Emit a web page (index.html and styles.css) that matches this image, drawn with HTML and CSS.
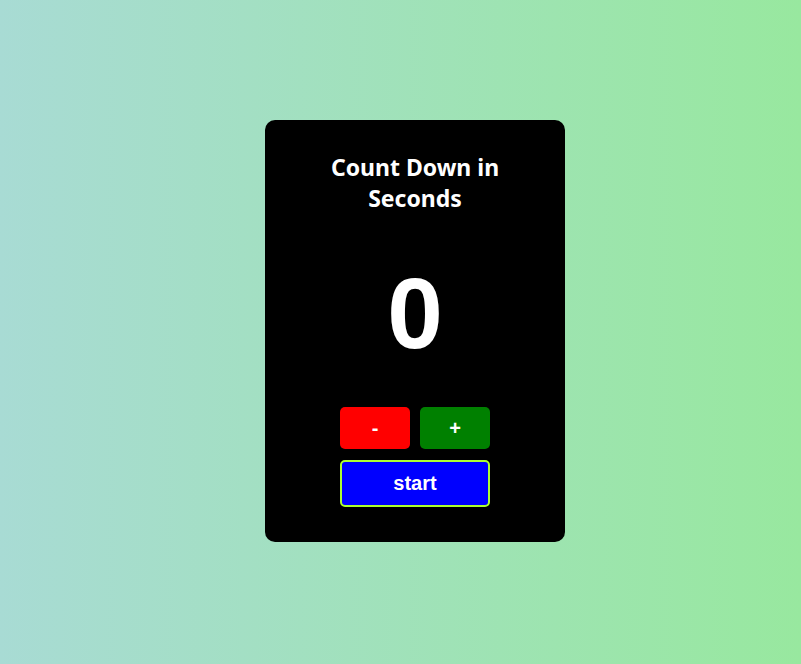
FILE: index.html
```html
<!DOCTYPE html>
<html>
<head>
<meta charset="utf-8">
<link rel="stylesheet" href="styles.css">
</head>
<body>
<div class="page">
  <div class="card">
    <h1 class="title">Count Down in Seconds</h1>
    <div class="count">0</div>
    <div class="controls">
      <div class="row">
        <button class="btn minus">-</button>
        <button class="btn plus">+</button>
      </div>
      <button class="btn start">start</button>
    </div>
  </div>
</div>
</body>
</html>
```
FILE: styles.css
```css
html, body {
  margin: 0;
  padding: 0;
  height: 100%;
}
body {
  background: linear-gradient(to right, #a8dbd4, #98e89f);
  font-family: "Liberation Sans", Arial, sans-serif;
}
.page {
  height: 100%;
  display: flex;
  justify-content: center;
  padding-top: 120px;
  padding-left: 29px;
  box-sizing: border-box;
}
.card {
  width: 300px;
  height: 422px;
  background: #000;
  border-radius: 10px;
  display: flex;
  flex-direction: column;
  align-items: center;
  box-sizing: border-box;
  padding-top: 32px;
}
.title {
  margin: 0;
  width: 210px;
  color: #fff;
  text-align: center;
  font-family: "Noto Sans", "Open Sans", sans-serif;
  font-size: 23px;
  line-height: 31px;
  font-weight: 700;
}
.count {
  margin-top: 44px;
  color: #fff;
  font-size: 100px;
  font-weight: 700;
  line-height: 110px;
}
.controls {
  margin-top: 39px;
  display: flex;
  flex-direction: column;
  gap: 11px;
}
.row {
  display: flex;
  gap: 10px;
}
.btn {
  border: none;
  border-radius: 5px;
  color: #fff;
  font-family: "Liberation Sans", Arial, sans-serif;
  font-weight: 700;
  font-size: 20px;
  padding: 0;
  cursor: pointer;
}
.minus {
  width: 70px;
  height: 42px;
  background: #ff0000;
}
.plus {
  width: 70px;
  height: 42px;
  background: #008000;
}
.start {
  width: 150px;
  height: 47px;
  background: #0000ff;
  border: 2px solid #adff2f;
}
```
